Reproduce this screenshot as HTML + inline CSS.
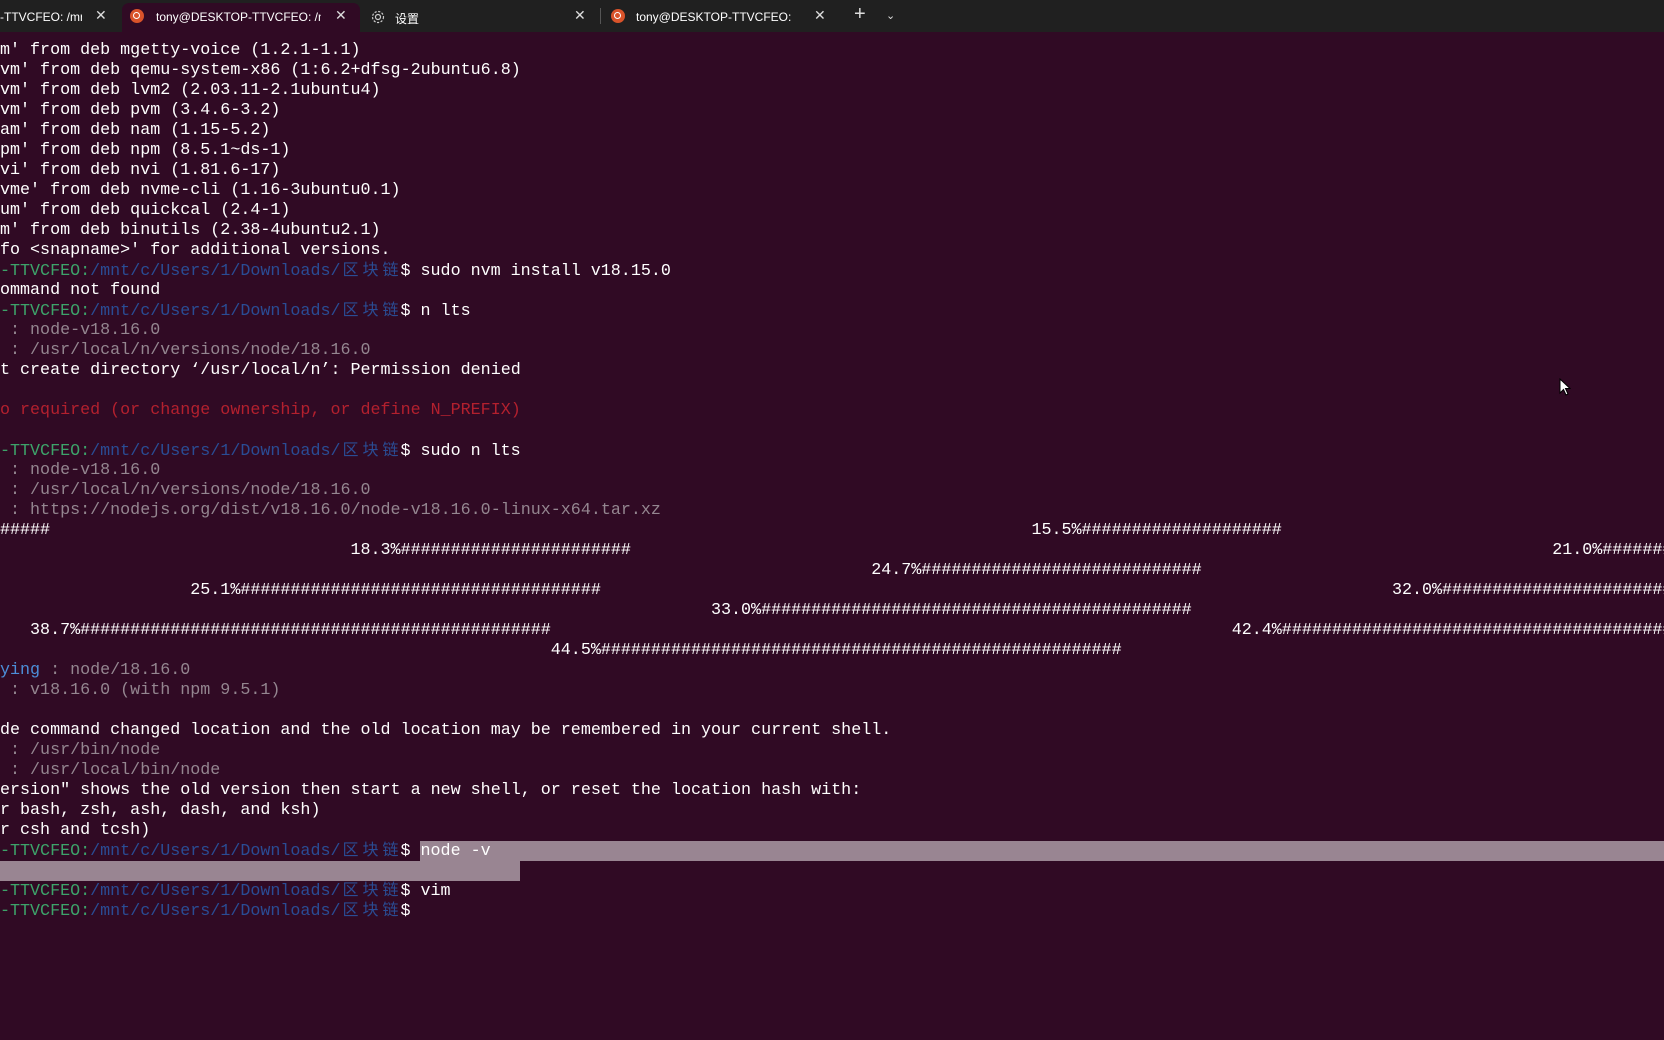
<!DOCTYPE html>
<html><head><meta charset="utf-8"><style>
body{margin:0;width:1664px;height:1040px;overflow:hidden;background:#300a24;position:relative;font-family:"Liberation Mono","Noto Sans CJK SC",monospace;}
#bar{position:absolute;left:0;top:0;width:1664px;height:32px;background:#202020;font-family:"Liberation Sans","Noto Sans CJK SC",sans-serif;font-size:12px;color:#fff;overflow:hidden}
.t{position:absolute;top:10px;white-space:nowrap;overflow:hidden;}
.x{position:absolute;top:7px;font-size:14px;color:#ddd;}
#act{position:absolute;left:122px;top:3px;width:238px;height:29px;background:#300a24;border-radius:7px 7px 0 0;}
.ub{position:absolute;top:9px;width:14px;height:14px;border-radius:50%;background:#d9532a;}
.ub:after{content:"";position:absolute;left:3px;top:3px;width:5px;height:5px;border:1.5px solid #fff;border-radius:50%;}
#term{position:absolute;left:0;top:0;width:1664px;height:1040px;overflow:hidden}
.l{position:absolute;left:0;height:20px;line-height:20px;font-size:16.7px;color:#fff;white-space:pre;}
.g{color:#3da36a}.b{color:#2a4c94}.c{display:inline-block;width:20px;text-align:center;font-size:16px;color:#2a4c94}
.gr{color:#948690}.r{color:#b3202e}.lb{color:#4c8ed8}
.hl{position:absolute;background:#998592;height:20px}
</style></head><body>
<div id="bar">
<div class="t" style="left:0;width:82px">-TTVCFEO: /mnt</div><div class="x" style="left:95px">✕</div>
<div id="act"></div>
<div class="ub" style="left:130px"></div>
<div class="t" style="left:156px;width:165px">tony@DESKTOP-TTVCFEO: /mnt</div><div class="x" style="left:335px">✕</div>
<svg style="position:absolute;left:370px;top:9px" width="16" height="16" viewBox="0 0 16 16"><circle cx="8" cy="8" r="2.5" fill="none" stroke="#ccc" stroke-width="1.2"/><circle cx="8" cy="8" r="5.5" fill="none" stroke="#ccc" stroke-width="1.2" stroke-dasharray="2.2 1.5"/></svg>
<div class="t" style="left:395px">设置</div><div class="x" style="left:574px">✕</div>
<div style="position:absolute;left:600px;top:8px;width:1px;height:16px;background:#555"></div>
<div class="ub" style="left:611px"></div>
<div class="t" style="left:636px;width:155px">tony@DESKTOP-TTVCFEO: ~</div><div class="x" style="left:814px">✕</div>
<div class="x" style="left:854px;font-size:20px;top:3px">+</div>
<div class="x" style="left:886px;font-size:11px;top:9px">⌄</div>
</div>
<div class="hl" style="left:420px;top:841px;width:1244px"></div>
<div class="hl" style="left:0;top:861px;width:520px"></div>
<div id="term"></div>
<svg style="position:absolute;left:1559px;top:378px" width="12" height="18" viewBox="0 0 12 18"><path d="M1 1 L1 15 L4.5 11.5 L7 17 L9 16 L6.5 10.5 L11 10.5 Z" fill="#fff" stroke="#000" stroke-width="1"/></svg>
<script>
var P='<span class="g">-TTVCFEO:</span><span class="b">/mnt/c/Users/1/Downloads/</span><span class="c">区</span><span class="c">块</span><span class="c">链</span>$';
function pad(n){return ' '.repeat(n)}
function h(n){return '#'.repeat(n)}
var L=[
"m' from deb mgetty-voice (1.2.1-1.1)",
"vm' from deb qemu-system-x86 (1:6.2+dfsg-2ubuntu6.8)",
"vm' from deb lvm2 (2.03.11-2.1ubuntu4)",
"vm' from deb pvm (3.4.6-3.2)",
"am' from deb nam (1.15-5.2)",
"pm' from deb npm (8.5.1~ds-1)",
"vi' from deb nvi (1.81.6-17)",
"vme' from deb nvme-cli (1.16-3ubuntu0.1)",
"um' from deb quickcal (2.4-1)",
"m' from deb binutils (2.38-4ubuntu2.1)",
"fo &lt;snapname&gt;' for additional versions.",
P+" sudo nvm install v18.15.0",
"ommand not found",
P+" n lts",
'<span class="gr"> : node-v18.16.0</span>',
'<span class="gr"> : /usr/local/n/versions/node/18.16.0</span>',
"t create directory ‘/usr/local/n’: Permission denied",
"",
'<span class="r">o required (or change ownership, or define N_PREFIX)</span>',
"",
P+" sudo n lts",
'<span class="gr"> : node-v18.16.0</span>',
'<span class="gr"> : /usr/local/n/versions/node/18.16.0</span>',
'<span class="gr"> : https://nodejs.org/dist/v18.16.0/node-v18.16.0-linux-x64.tar.xz</span>',
h(5)+pad(98)+"15.5%"+h(20),
pad(35)+"18.3%"+h(23)+pad(92)+"21.0%"+h(20),
pad(87)+"24.7%"+h(28),
pad(19)+"25.1%"+h(36)+pad(79)+"32.0%"+h(30),
pad(71)+"33.0%"+h(43),
pad(3)+"38.7%"+h(47)+pad(68)+"42.4%"+h(50),
pad(55)+"44.5%"+h(52),
'<span class="lb">ying</span><span class="gr"> : node/18.16.0</span>',
'<span class="gr"> : v18.16.0 (with npm 9.5.1)</span>',
"",
"de command changed location and the old location may be remembered in your current shell.",
'<span class="gr"> : /usr/bin/node</span>',
'<span class="gr"> : /usr/local/bin/node</span>',
'ersion" shows the old version then start a new shell, or reset the location hash with:',
"r bash, zsh, ash, dash, and ksh)",
"r csh and tcsh)",
P+" node -v",
"",
P+" vim",
P
];
var s='';for(var i=0;i<L.length;i++){s+='<div class="l" style="top:'+(41+20*i)+'px">'+L[i]+'</div>'}
document.getElementById('term').innerHTML=s;
</script>
</body></html>
